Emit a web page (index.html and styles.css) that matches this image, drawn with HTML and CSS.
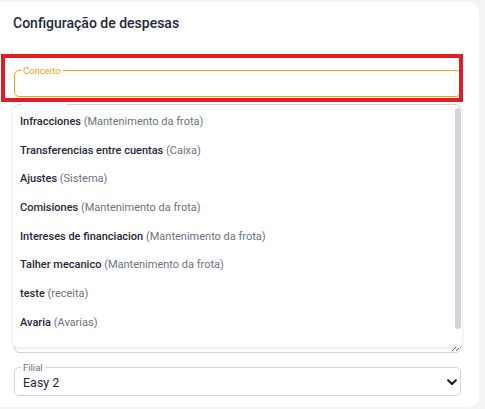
FILE: index.html
```html
<!DOCTYPE html>
<html lang="pt">
<head>
<meta charset="utf-8">
<title>Configuração de despesas</title>
<link rel="stylesheet" href="styles.css">
</head>
<body>
<div class="card">
  <h2 class="title">Configuração de despesas</h2>

  <div class="field-wrap">
    <fieldset class="field field-active">
      <legend>Conceito</legend>
      <div class="input"></div>
    </fieldset>
    <div class="highlight"></div>

    <ul class="dropdown">
      <li><b>Infracciones</b> <span>(Mantenimento da frota)</span></li>
      <li><b>Transferencias entre cuentas</b> <span>(Caixa)</span></li>
      <li><b>Ajustes</b> <span>(Sistema)</span></li>
      <li><b>Comisiones</b> <span>(Mantenimento da frota)</span></li>
      <li><b>Intereses de financiacion</b> <span>(Mantenimento da frota)</span></li>
      <li><b>Talher mecanico</b> <span>(Mantenimento da frota)</span></li>
      <li><b>teste</b> <span>(receita)</span></li>
      <li><b>Avaria</b> <span>(Avarias)</span></li>
      <li class="thumb"></li>
    </ul>
  </div>

  <fieldset class="field field-area">
    <legend>Descrição</legend>
    <textarea class="area"></textarea>
  </fieldset>

  <fieldset class="field field-select">
    <legend>Filial</legend>
    <div class="select-row">
      <span class="value">Easy 2</span>
      <svg class="chev" width="10" height="7" viewBox="0 0 10 7"><path d="M1.2 1.3 L5 5 L8.8 1.3" fill="none" stroke="#222" stroke-width="2.2" stroke-linecap="round" stroke-linejoin="round"/></svg>
    </div>
  </fieldset>
</div>
</body>
</html>
```

FILE: styles.css
```css
html, body {
  margin: 0;
  padding: 0;
}
body {
  background: #f3f4f6;
  font-family: Roboto, "Liberation Sans", Arial, sans-serif;
  width: 485px;
  height: 409px;
  overflow: hidden;
}
.card {
  box-sizing: border-box;
  background: #ffffff;
  margin: 2px 0 0 -10px;
  width: 489px;
  height: 405px;
  border-radius: 10px;
  padding: 12px 18px 0 24px;
  display: flex;
  flex-direction: column;
}
.title {
  margin: 0 0 0 -1px;
  font-size: 14px;
  line-height: 18px;
  font-weight: 500;
  color: #1f2937;
}
.field-wrap {
  position: relative;
  margin-top: 33px;
}
.field {
  margin: 0;
  min-width: 0;
  border: 1px solid #d1d5db;
  border-radius: 5px;
  padding: 0 6px;
}
.field legend {
  font-size: 9.5px;
  line-height: 11px;
  padding: 0 2px;
  color: #6b7280;
}
.field-active {
  border-color: #f5a00f;
}
.field-active legend {
  color: #f5a00f;
}
.input {
  height: 20px;
}
.highlight {
  position: absolute;
  left: -13px;
  top: -11px;
  right: -2px;
  bottom: -5px;
  border: 4px solid #e31b23;
  pointer-events: none;
}
.dropdown {
  position: absolute;
  z-index: 2;
  left: -1px;
  top: 42px;
  width: 449px;
  height: 240px;
  box-sizing: border-box;
  margin: 0;
  padding: 1px 0 0 7px;
  list-style: none;
  background: #fff;
  border-radius: 4px;
  box-shadow: 0 1px 4px rgba(0, 0, 0, 0.10), 0 0 1px rgba(0, 0, 0, 0.12);
  overflow: hidden;
}
.dropdown li {
  height: 28.7px;
  line-height: 28.7px;
  font-size: 11px;
  white-space: nowrap;
}
.dropdown b {
  font-weight: 500;
  color: #1f2937;
}
.dropdown span {
  color: #6b7280;
}
.dropdown li.thumb {
  position: absolute;
  right: 1px;
  top: 1px;
  width: 6px;
  height: 221px;
  background: #d1d5db;
  border-radius: 3px;
}
.field-area {
  margin-top: 2px;
}
.field-area legend {
  color: #fff;
}
.area {
  display: block;
  box-sizing: border-box;
  width: calc(100% + 6px);
  height: 242px;
  margin: 0 -4px 0 0;
  border: none;
  outline: none;
  resize: vertical;
  background: transparent;
}
.field-select {
  margin-top: 9px;
  padding-right: 3px;
}
.select-row {
  height: 25px;
  display: flex;
  align-items: center;
  justify-content: space-between;
  padding-left: 2px;
  margin-top: -3px;
}
.value {
  font-size: 12.5px;
  color: #1f2937;
}
.chev {
  display: block;
}
```
